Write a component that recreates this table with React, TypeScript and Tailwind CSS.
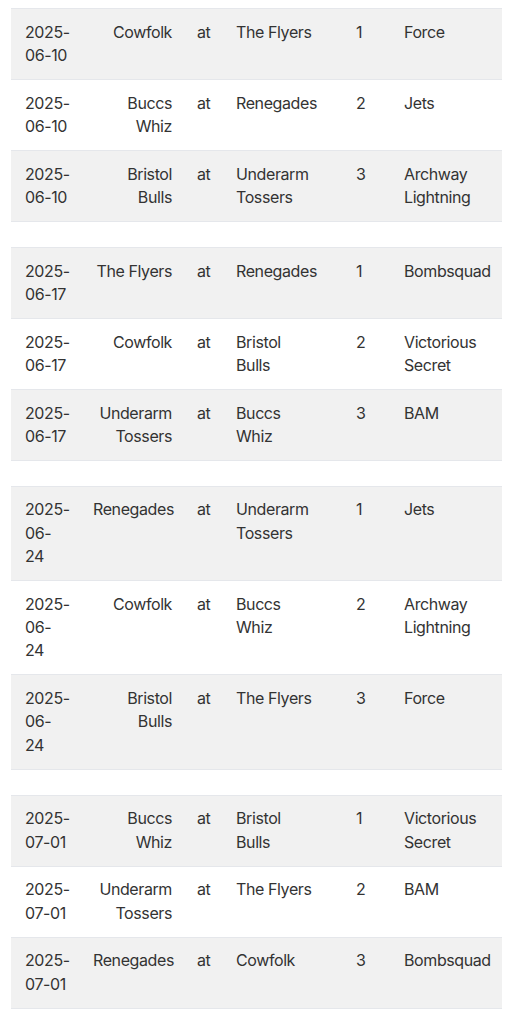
type Game = {
  date: string[];
  home: string[];
  away: string[];
  field: string;
  venue: string[];
};

const groups: Game[][] = [
  [
    { date: ["2025-", "06-10"], home: ["Cowfolk"], away: ["The Flyers"], field: "1", venue: ["Force"] },
    { date: ["2025-", "06-10"], home: ["Buccs", "Whiz"], away: ["Renegades"], field: "2", venue: ["Jets"] },
    { date: ["2025-", "06-10"], home: ["Bristol", "Bulls"], away: ["Underarm", "Tossers"], field: "3", venue: ["Archway", "Lightning"] },
  ],
  [
    { date: ["2025-", "06-17"], home: ["The Flyers"], away: ["Renegades"], field: "1", venue: ["Bombsquad"] },
    { date: ["2025-", "06-17"], home: ["Cowfolk"], away: ["Bristol", "Bulls"], field: "2", venue: ["Victorious", "Secret"] },
    { date: ["2025-", "06-17"], home: ["Underarm", "Tossers"], away: ["Buccs", "Whiz"], field: "3", venue: ["BAM"] },
  ],
  [
    { date: ["2025-", "06-", "24"], home: ["Renegades"], away: ["Underarm", "Tossers"], field: "1", venue: ["Jets"] },
    { date: ["2025-", "06-", "24"], home: ["Cowfolk"], away: ["Buccs", "Whiz"], field: "2", venue: ["Archway", "Lightning"] },
    { date: ["2025-", "06-", "24"], home: ["Bristol", "Bulls"], away: ["The Flyers"], field: "3", venue: ["Force"] },
  ],
  [
    { date: ["2025-", "07-01"], home: ["Buccs", "Whiz"], away: ["Bristol", "Bulls"], field: "1", venue: ["Victorious", "Secret"] },
    { date: ["2025-", "07-01"], home: ["Underarm", "Tossers"], away: ["The Flyers"], field: "2", venue: ["BAM"] },
    { date: ["2025-", "07-01"], home: ["Renegades"], away: ["Cowfolk"], field: "3", venue: ["Bombsquad"] },
  ],
];

function Lines({ lines }: { lines: string[] }) {
  return (
    <>
      {lines.map((l, i) => (
        <span key={i} className="block whitespace-nowrap">
          {l}
        </span>
      ))}
    </>
  );
}

function Fixtures({ games }: { games: Game[] }) {
  return (
    <table className="w-[491px] table-fixed border-collapse border-t border-[#e5e7eb] mb-[25px]">
      <colgroup>
        <col className="w-[70px]" />
        <col className="w-[104px]" />
        <col className="w-[39px]" />
        <col className="w-[120px]" />
        <col className="w-[48px]" />
        <col className="w-[110px]" />
      </colgroup>
      <tbody>
        {games.map((g, i) => (
          <tr key={i} className={`border-b border-[#e5e7eb] ${i % 2 === 0 ? "bg-[#f1f1f1]" : "bg-white"}`}>
            <td className="pl-[14px] pr-2 py-[11.67px] align-top">
              <Lines lines={g.date} />
            </td>
            <td className="pl-3 pr-[13px] py-[11.67px] align-top text-right">
              <Lines lines={g.home} />
            </td>
            <td className="px-3 py-[11.67px] align-top">at</td>
            <td className="px-3 py-[11.67px] align-top">
              <Lines lines={g.away} />
            </td>
            <td className="px-3 py-[11.67px] align-top">{g.field}</td>
            <td className="pl-3 pr-1 py-[11.67px] align-top">
              <Lines lines={g.venue} />
            </td>
          </tr>
        ))}
      </tbody>
    </table>
  );
}

export default function App() {
  return (
    <div
      className="min-h-[1024px] bg-white pt-[8px] pl-[11px] text-[16px] leading-[23.33px] tracking-[-0.4px] text-[#333333]"
      style={{ fontFamily: "Inter, 'Noto Sans', sans-serif" }}
    >
      {groups.map((g, i) => (
        <Fixtures key={i} games={g} />
      ))}
    </div>
  );
}
